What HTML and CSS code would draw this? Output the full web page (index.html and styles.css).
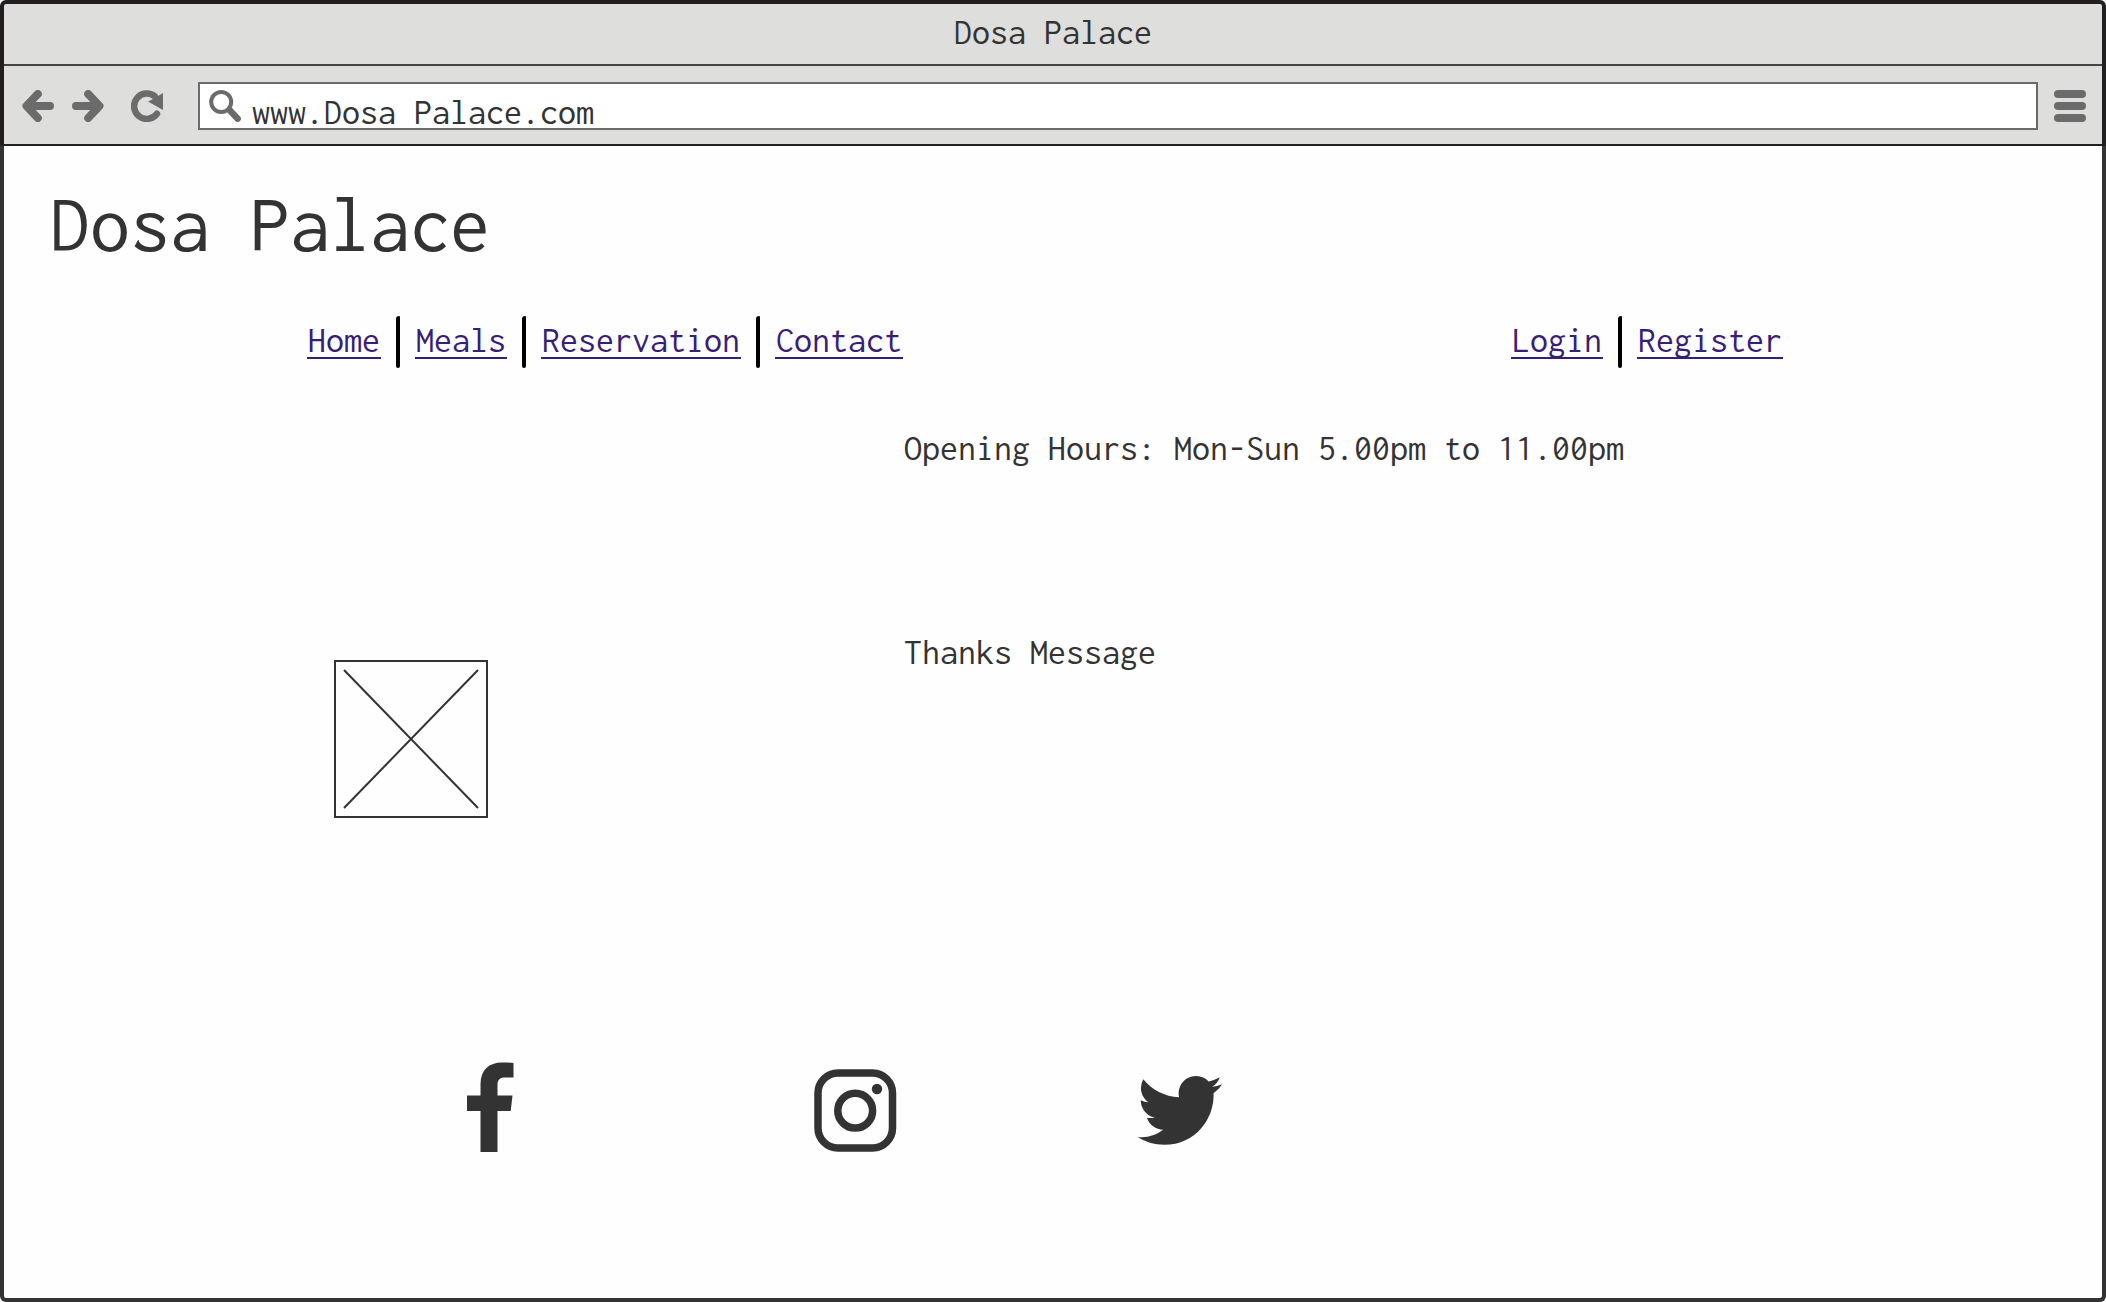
FILE: index.html
```html
<!DOCTYPE html>
<html lang="en">
<head>
<meta charset="utf-8">
<meta name="viewport" content="width=device-width, initial-scale=1">
<title>Dosa Palace</title>
<link rel="stylesheet" href="styles.css">
</head>
<body>
<div class="browser">
  <header class="chrome">
    <div class="title-bar">Dosa Palace</div>
    <div class="toolbar">
      <button class="tool" type="button" aria-label="Back">
        <svg class="tool-icon" viewBox="0 0 32 32"><path d="M28 16H5M15.8 4L4.5 16L15.8 28" stroke-width="8"/></svg>
      </button>
      <button class="tool" type="button" aria-label="Forward">
        <svg class="tool-icon" viewBox="0 0 32 32"><path d="M4 16H27M16.2 4L27.5 16L16.2 28" stroke-width="8"/></svg>
      </button>
      <button class="tool tool-reload" type="button" aria-label="Reload">
        <svg class="tool-icon" viewBox="0 0 32 32"><path d="M24 6.5A12.7 12.7 0 1 0 26 23.8" stroke-width="6.5"/><path class="solid" d="M32 3V20L17 11.5L24 8Z"/></svg>
      </button>
      <label class="address">
        <svg class="tool-icon" viewBox="0 0 32 32" aria-hidden="true"><circle cx="12.2" cy="12" r="10" stroke-width="4"/><path d="M20.5 20L28.7 28.7" stroke-width="6.5"/></svg>
        <input class="address-input" type="text" aria-label="Address" value="www.Dosa Palace.com">
      </label>
      <button class="tool tool-menu" type="button" aria-label="Menu">
        <svg class="tool-icon" viewBox="0 0 32 32"><path d="M4 4H28M4 16H28M4 28H28" stroke-width="8"/></svg>
      </button>
    </div>
  </header>

  <main class="page">
    <h1 class="brand">Dosa Palace</h1>

    <nav class="nav" aria-label="Main">
      <div class="nav-group">
        <a class="nav-link" href="#home">Home</a>
        <span class="divider"></span>
        <a class="nav-link" href="#meals">Meals</a>
        <span class="divider"></span>
        <a class="nav-link" href="#reservation">Reservation</a>
        <span class="divider"></span>
        <a class="nav-link" href="#contact">Contact</a>
      </div>
      <div class="nav-group">
        <a class="nav-link" href="#login">Login</a>
        <span class="divider"></span>
        <a class="nav-link" href="#register">Register</a>
      </div>
    </nav>

    <section class="content">
      <svg class="placeholder" viewBox="0 0 154 158" role="img" aria-label="Image placeholder">
        <rect x="1" y="1" width="152" height="156"/>
        <path d="M10 10L144 148M144 10L10 148"/>
      </svg>
      <div class="messages">
        <p class="message">Opening Hours: Mon-Sun 5.00pm to 11.00pm</p>
        <p class="message">Thanks Message</p>
      </div>
    </section>

    <footer class="social">
      <a class="social-link" href="#facebook" aria-label="Facebook">
        <svg class="social-icon" viewBox="0 0 90 90"><path d="M35.5 90V49H22V33.5H35.5V22C35.5 8 44 .5 57 .5C62 .5 66 .6 68.5 1V15.5H60C54.5 15.5 52.5 18 52.5 23V33.5H67.5L65.7 49H52.5V90Z"/></svg>
      </a>
      <a class="social-link" href="#instagram" aria-label="Instagram">
        <svg class="social-icon" viewBox="0 0 90 90"><rect class="line" x="8" y="11" width="74.5" height="75" rx="20"/><circle class="line" cx="45.2" cy="48.7" r="17.4"/><circle cx="67" cy="27" r="5.2"/></svg>
      </a>
      <a class="social-link" href="#twitter" aria-label="Twitter">
        <svg class="social-icon" viewBox="0 0 90 90"><path transform="translate(2.5 6) scale(3.53)" d="M23.953 4.57a10 10 0 01-2.825.775 4.958 4.958 0 002.163-2.723c-.951.555-2.005.959-3.127 1.184a4.92 4.92 0 00-8.384 4.482C7.69 8.095 4.067 6.13 1.64 3.162a4.822 4.822 0 00-.666 2.475c0 1.71.87 3.213 2.188 4.096a4.904 4.904 0 01-2.228-.616v.06a4.923 4.923 0 003.946 4.827 4.996 4.996 0 01-2.212.085 4.936 4.936 0 004.604 3.417 9.867 9.867 0 01-6.102 2.105c-.39 0-.779-.023-1.17-.067a13.995 13.995 0 007.557 2.209c9.053 0 13.998-7.496 13.998-13.985 0-.21 0-.42-.015-.63A9.935 9.935 0 0024 4.59z"/></svg>
      </a>
    </footer>
  </main>
</div>
</body>
</html>
```
FILE: styles.css
```css
* {
  box-sizing: border-box;
}

body {
  margin: 0;
  background: #fff;
  color: #333;
  font: 36px/40px "Inconsolata", "Noto Sans Mono", "Liberation Mono", monospace;
}

.browser {
  display: flex;
  flex-direction: column;
  min-height: 100vh;
}

/* Window chrome */

.chrome {
  border: 4px solid #231f20;
  border-bottom-width: 2px;
  border-radius: 6px 6px 0 0;
  background: #dededc;
}

.title-bar {
  padding: 8px 0 12px;
  border-bottom: 2px solid #444;
  text-align: center;
}

.toolbar {
  display: flex;
  align-items: center;
  gap: 18px;
  padding: 16px 16px 14px 18px;
}

.tool {
  display: flex;
  flex: none;
  padding: 0;
  border: 0;
  background: none;
}

.tool-reload {
  margin: 0 17px 0 9px;
}

.tool-menu {
  margin-left: -2px;
}

.tool-icon {
  flex: none;
  width: 32px;
  height: 32px;
  fill: none;
  stroke: #6b6b6b;
  stroke-linecap: round;
  stroke-linejoin: round;
}

.solid {
  fill: #6b6b6b;
  stroke: none;
}

.address {
  display: flex;
  flex: 1;
  align-items: center;
  gap: 11px;
  min-width: 0;
  height: 48px;
  padding-left: 9px;
  border: 2px solid #6b6b6b;
  background: #fff;
}

.address-input {
  flex: 1;
  min-width: 0;
  height: 44px;
  padding: 12px 0 0;
  border: 0;
  outline: 0;
  background: none;
  color: inherit;
  font: inherit;
}

/* Page */

.page {
  display: flex;
  flex: 1;
  flex-direction: column;
  border: 4px solid #333;
  border-top: 0;
  border-radius: 0 0 6px 6px;
  background: #fefefe;
}

.brand {
  margin: 34px 46px 48px;
  font-size: 80px;
  font-weight: 400;
  line-height: 88px;
}

.nav {
  display: flex;
  flex-wrap: wrap;
  justify-content: space-between;
  padding: 0 319px 0 303px;
}

.nav-group {
  display: flex;
  align-items: center;
  gap: 15px;
}

.nav-link {
  margin-bottom: 2px;
  padding: 0 1px;
  border-bottom: 2px solid;
  color: #371e77;
  line-height: 34px;
  text-decoration: none;
}

.divider {
  width: 4px;
  height: 52px;
  border-radius: 3px 1px 2px 2px;
  background: #000;
}

.content {
  display: grid;
  grid-template-columns: 570px 1fr;
  padding: 60px 0 0 330px;
}

.placeholder {
  width: 154px;
  height: 158px;
  margin-top: 232px;
  fill: none;
  stroke: #333;
  stroke-width: 2;
}

.messages {
  display: flex;
  flex-direction: column;
  gap: 164px;
}

.message {
  margin: 0;
}

.social {
  display: grid;
  grid-template-columns: 365px 325px 90px;
  margin-top: auto;
  padding: 0 0 146px 441px;
}

.social-link {
  width: 90px;
  height: 90px;
}

.social-icon {
  display: block;
  width: 90px;
  height: 90px;
  fill: #333;
}

.line {
  fill: none;
  stroke: #333;
  stroke-width: 7.5;
}
```
